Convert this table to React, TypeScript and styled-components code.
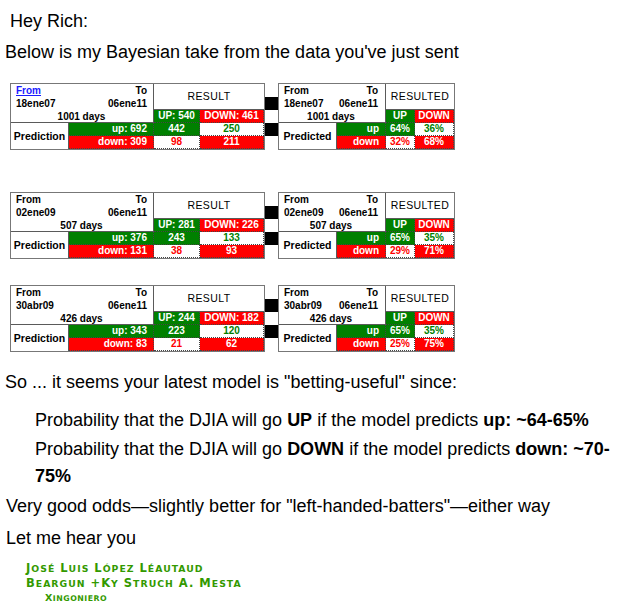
import React from 'react';
import styled, { createGlobalStyle } from 'styled-components';

const GREEN = '#008000';
const RED = '#ff0000';
const LINE = '#5a5a5a';

const GlobalStyle = createGlobalStyle`
  html, body {
    margin: 0;
    padding: 0;
    background: #fff;
    overflow: hidden;
  }
  body {
    font-family: "Liberation Sans", Arial, sans-serif;
    color: #000;
  }
`;

const Page = styled.div`
  width: 622px;
  height: 613px;
  padding-top: 8px;
  box-sizing: border-box;
`;

const Line = styled.p<{ $indent: number; $top: number }>`
  margin: ${p => p.$top}px 0 0 ${p => p.$indent}px;
  font-size: 18px;
  line-height: 27px;
`;

const Pair = styled.div<{ $top: number }>`
  display: flex;
  align-items: flex-start;
  margin: ${p => p.$top}px 0 0 10px;
`;

const Table = styled.div<{ $cols: string }>`
  display: grid;
  grid-template-columns: ${p => p.$cols};
  grid-template-rows: repeat(5, 13px);
  border: 1px solid #777;
  font-size: 10px;
  font-weight: bold;
  line-height: 13px;
  background: #fff;
`;

const Period = styled.div<{ $padRight: number }>`
  grid-column: 1 / 3;
  grid-row: 1 / 4;
  display: grid;
  grid-template-columns: 1fr 1fr;
  grid-template-rows: repeat(3, 1fr);
  padding: 0 ${p => p.$padRight}px 0 5px;
  border-right: 1px solid ${LINE};
  border-bottom: 1px solid ${LINE};
`;

const FromLabel = styled.span<{ $link?: boolean }>`
  color: ${p => (p.$link ? '#1a1aff' : '#000')};
  text-decoration: ${p => (p.$link ? 'underline' : 'none')};
`;

const Right = styled.span`
  text-align: right;
`;

const Days = styled.span`
  grid-column: 1 / 3;
  text-align: center;
`;

const Header = styled.div`
  grid-column: 3 / 5;
  grid-row: 1 / 3;
  display: flex;
  align-items: center;
  justify-content: center;
  font-weight: normal;
  font-size: 10.5px;
  letter-spacing: 0.4px;
  border-bottom: 1px solid ${LINE};
`;

const RowLabel = styled.div`
  grid-column: 1;
  grid-row: 4 / 6;
  display: flex;
  align-items: center;
  justify-content: center;
  font-size: 10.5px;
  border-right: 1px solid ${LINE};
`;

const Cell = styled.div<{ $col: number; $row: number; $bg: string; $fg: string; $right?: boolean }>`
  grid-column: ${p => p.$col};
  grid-row: ${p => p.$row};
  background: ${p => p.$bg};
  color: ${p => p.$fg};
  text-align: ${p => (p.$right ? 'right' : 'center')};
  padding-right: ${p => (p.$right ? 6 : 0)}px;
  border-right: 1px dotted #444;
  border-bottom: 1px dotted #444;
  box-sizing: border-box;
  line-height: 12px;
`;

const Gap = styled.div`
  display: grid;
  grid-template-rows: repeat(5, 13px);
  width: 13px;
  margin-top: 1px;
`;

const Mark = styled.div<{ $on: boolean }>`
  background: ${p => (p.$on ? '#000' : 'transparent')};
`;

const Signature = styled.div`
  margin: 7px 0 0 26px;
  color: #339900;
  font-family: "DejaVu Sans", Verdana, sans-serif;
  font-weight: bold;
  letter-spacing: 1px;
`;

const Title = styled.div`
  height: 15px;
  line-height: 15px;
  white-space: nowrap;
`;

const SubTitle = styled.div`
  margin-left: 19px;
  height: 14px;
  line-height: 14px;
  letter-spacing: 0.5px;
`;

const Cap = styled.span<{ $size: number }>`
  font-size: ${p => p.$size}px;
  line-height: 1;
`;

const Low = styled.span<{ $size: number }>`
  font-size: ${p => p.$size}px;
  line-height: 1;
  text-transform: uppercase;
`;

// small caps drawn by hand: capitals and signs at full size, the rest smaller
const SmallCaps: React.FC<{ text: string; big: number; small: number }> = ({ text, big, small }) => (
  <>
    {text.split('').map((c, i) =>
      c !== c.toUpperCase() ? (
        <Low key={i} $size={small}>{c}</Low>
      ) : (
        <Cap key={i} $size={big}>{c}</Cap>
      )
    )}
  </>
);

type Block = {
  top: number;
  from: string;
  to: string;
  days: string;
  link?: boolean;
  up: number;
  down: number;
  pUp: number;
  pDown: number;
  cells: [number, number, number, number];
  pct: [string, string, string, string];
};

const blocks: Block[] = [
  { top: 17, from: '18ene07', to: '06ene11', days: '1001 days', link: true, up: 540, down: 461, pUp: 692, pDown: 309, cells: [442, 250, 98, 211], pct: ['64%', '36%', '32%', '68%'] },
  { top: 42, from: '02ene09', to: '06ene11', days: '507 days', up: 281, down: 226, pUp: 376, pDown: 131, cells: [243, 133, 38, 93], pct: ['65%', '35%', '29%', '71%'] },
  { top: 26, from: '30abr09', to: '06ene11', days: '426 days', up: 244, down: 182, pUp: 343, pDown: 83, cells: [223, 120, 21, 62], pct: ['65%', '35%', '25%', '75%'] },
];

const PeriodBox: React.FC<{ b: Block; pad: number; link?: boolean }> = ({ b, pad, link }) => (
  <Period $padRight={pad}>
    <FromLabel $link={link}>From</FromLabel>
    <Right>To</Right>
    <span>{b.from}</span>
    <Right>{b.to}</Right>
    <Days>{b.days}</Days>
  </Period>
);

const TablePair: React.FC<{ b: Block }> = ({ b }) => (
  <Pair $top={b.top}>
    <Table $cols="58px 85px 46px 64px">
      <PeriodBox b={b} pad={6} link={b.link} />
      <Header>RESULT</Header>
      <Cell $col={3} $row={3} $bg={GREEN} $fg="#fff">UP: {b.up}</Cell>
      <Cell $col={4} $row={3} $bg={RED} $fg="#fff">DOWN: {b.down}</Cell>
      <RowLabel>Prediction</RowLabel>
      <Cell $col={2} $row={4} $bg={GREEN} $fg="#fff" $right>up: {b.pUp}</Cell>
      <Cell $col={2} $row={5} $bg={RED} $fg="#fff" $right>down: {b.pDown}</Cell>
      <Cell $col={3} $row={4} $bg={GREEN} $fg="#fff">{b.cells[0]}</Cell>
      <Cell $col={4} $row={4} $bg="#fff" $fg={GREEN}>{b.cells[1]}</Cell>
      <Cell $col={3} $row={5} $bg="#fff" $fg={RED}>{b.cells[2]}</Cell>
      <Cell $col={4} $row={5} $bg={RED} $fg="#fff">{b.cells[3]}</Cell>
    </Table>
    <Gap>
      {[false, true, false, true, false].map((on, i) => (
        <Mark key={i} $on={on} />
      ))}
    </Gap>
    <Table $cols="58px 49px 29px 39px">
      <PeriodBox b={b} pad={7} />
      <Header>RESULTED</Header>
      <Cell $col={3} $row={3} $bg={GREEN} $fg="#fff">UP</Cell>
      <Cell $col={4} $row={3} $bg={RED} $fg="#fff">DOWN</Cell>
      <RowLabel>Predicted</RowLabel>
      <Cell $col={2} $row={4} $bg={GREEN} $fg="#fff" $right>up</Cell>
      <Cell $col={2} $row={5} $bg={RED} $fg="#fff" $right>down</Cell>
      <Cell $col={3} $row={4} $bg={GREEN} $fg="#fff">{b.pct[0]}</Cell>
      <Cell $col={4} $row={4} $bg="#fff" $fg={GREEN}>{b.pct[1]}</Cell>
      <Cell $col={3} $row={5} $bg="#fff" $fg={RED}>{b.pct[2]}</Cell>
      <Cell $col={4} $row={5} $bg={RED} $fg="#fff">{b.pct[3]}</Cell>
    </Table>
  </Pair>
);

const App: React.FC = () => (
  <Page>
    <GlobalStyle />
    <Line $indent={10} $top={0}>Hey Rich:</Line>
    <Line $indent={5} $top={4}>Below is my Bayesian take from the data you've just sent</Line>
    {blocks.map((b, i) => (
      <TablePair key={i} b={b} />
    ))}
    <Line $indent={5} $top={17}>So ... it seems your latest model is "betting-useful" since:</Line>
    <Line $indent={35} $top={11}>
      Probability that the DJIA will go <b>UP</b> if the model predicts <b>up: ~64-65%</b>
    </Line>
    <Line $indent={35} $top={2}>
      Probability that the DJIA will go <b>DOWN</b> if the model predicts <b>down: ~70-</b>
      <br />
      <b>75%</b>
    </Line>
    <Line $indent={6} $top={3}>Very good odds—slightly better for "left-handed-batters"—either way</Line>
    <Line $indent={6} $top={5}>Let me hear you</Line>
    <Signature>
      <Title><SmallCaps text="José Luis López Léautaud" big={11.5} small={9.3} /></Title>
      <Title><SmallCaps text="Beargun +Ky Struch A. Mesta" big={11.5} small={9.3} /></Title>
      <SubTitle><SmallCaps text="Xingoniero" big={9.5} small={7.8} /></SubTitle>
    </Signature>
  </Page>
);

export default App;
